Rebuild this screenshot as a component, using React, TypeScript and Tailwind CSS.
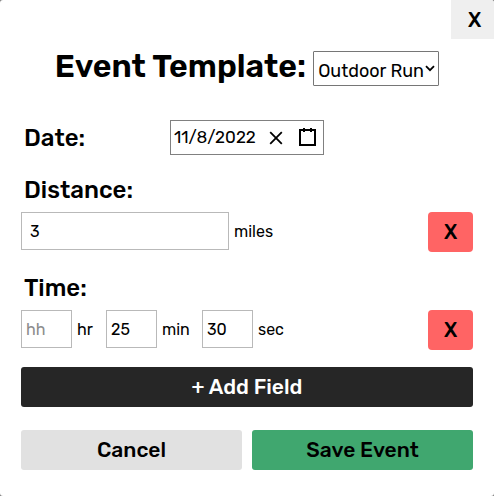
import { useState } from "react";
import type { ReactNode } from "react";

function RemoveButton({ label }: { label: string }) {
  return (
    <button
      type="button"
      aria-label={label}
      className="h-10 w-[45px] shrink-0 rounded bg-[#ff6464] text-xl leading-6 font-medium"
    >
      X
    </button>
  );
}

function FieldRow({ children, removeLabel }: { children: ReactNode; removeLabel: string }) {
  return (
    <div className="mt-1.5 flex items-start justify-between">
      <div className="flex h-[38px] items-center gap-[5px] text-base">{children}</div>
      <RemoveButton label={removeLabel} />
    </div>
  );
}

const timeInput = "h-[38px] w-[51px] border border-[#b9b9b9] px-1 placeholder:text-[#8c8c8c]";

export default function App() {
  const [template, setTemplate] = useState("Outdoor Run");
  const [date, setDate] = useState("11/8/2022");

  return (
    <div className="bg-[#7f7f7f] font-['Rubik','Roboto',sans-serif] text-black">
      <form
        className="relative min-h-screen rounded-[3px] bg-white px-[21px] pt-[50px] pb-[26px]"
        onSubmit={(e) => e.preventDefault()}
      >
        <button
          type="button"
          aria-label="Close"
          className="absolute top-0 right-0 h-[39px] w-[43px] rounded-tr-[3px] bg-[#efefef] pl-1 text-xl leading-6 font-medium"
        >
          X
        </button>

        <div className="flex items-start justify-center gap-[7px]">
          <h1 className="text-[32px] leading-8 font-semibold whitespace-nowrap">
            <label htmlFor="template">Event Template:</label>
          </h1>
          <div className="relative mt-px">
            <select
              id="template"
              value={template}
              onChange={(e) => setTemplate(e.target.value)}
              className="block h-[35px] w-[126px] appearance-none rounded-[1px] border border-[#767676] bg-white pt-1.5 pl-1 text-[18px]"
            >
              <option>Outdoor Run</option>
              <option>Indoor Run</option>
            </select>
            <svg
              className="pointer-events-none absolute top-[14px] right-1 h-[7px] w-[10px]"
              viewBox="0 0 10 7"
              fill="none"
              stroke="black"
              strokeWidth="1.8"
            >
              <path d="M1 1.2 5 5.2 9 1.2" />
            </svg>
          </div>
        </div>

        <div className="mt-[34px] grid grid-cols-[1fr_auto_1fr] items-center">
          <label htmlFor="date" className="pl-[3px] text-2xl leading-8 font-medium">
            Date:
          </label>
          <div className="flex h-[35px] w-[154px] items-center border border-[#808080] pr-[7px] pl-[3px]">
            <input
              id="date"
              value={date}
              onChange={(e) => setDate(e.target.value)}
              className="w-[95px] min-w-0 text-[17px]"
            />
            <button type="button" aria-label="Clear date" onClick={() => setDate("")}>
              <svg className="block h-[14px] w-[14px]" viewBox="0 0 14 14" stroke="black" strokeWidth="1.8">
                <path d="M1.2 1.2 12.8 12.8M12.8 1.2 1.2 12.8" />
              </svg>
            </button>
            <button type="button" aria-label="Open calendar" className="ml-auto">
              <svg className="block h-[19px] w-[17px]" viewBox="0 0 17 19" fill="none" stroke="black">
                <path d="M1 2h15v15H1z" strokeWidth="2" />
                <path d="M5 0v4M12 0v4" strokeWidth="2" />
              </svg>
            </button>
          </div>
        </div>

        <label htmlFor="distance" className="mt-[19px] block pl-[3px] text-2xl leading-8 font-medium">
          Distance:
        </label>
        <FieldRow removeLabel="Remove distance">
          <input id="distance" defaultValue="3" className="h-[38px] w-52 border border-[#b9b9b9] px-2" />
          <span className="pt-0.5">miles</span>
        </FieldRow>

        <label htmlFor="hours" className="mt-5 block pl-[3px] text-2xl leading-8 font-medium">
          Time:
        </label>
        <FieldRow removeLabel="Remove time">
          <input id="hours" placeholder="hh" className={timeInput} />
          <span className="w-6 pt-0.5">hr</span>
          <input aria-label="Minutes" defaultValue="25" className={timeInput} />
          <span className="w-[35px] pt-0.5">min</span>
          <input aria-label="Seconds" defaultValue="30" className={timeInput} />
          <span className="pt-0.5">sec</span>
        </FieldRow>

        <button
          type="button"
          className="mt-[17px] h-10 w-full rounded-[3px] bg-[#262626] text-[21px] font-medium text-white"
        >
          + Add Field
        </button>

        <div className="mt-[23px] grid grid-cols-2 gap-[10px] text-[21px] font-medium">
          <button type="button" className="h-10 rounded-[3px] bg-[#e1e1e1]">
            Cancel
          </button>
          <button type="submit" className="h-10 rounded-[3px] bg-[#40a76f]">
            Save Event
          </button>
        </div>
      </form>
    </div>
  );
}
